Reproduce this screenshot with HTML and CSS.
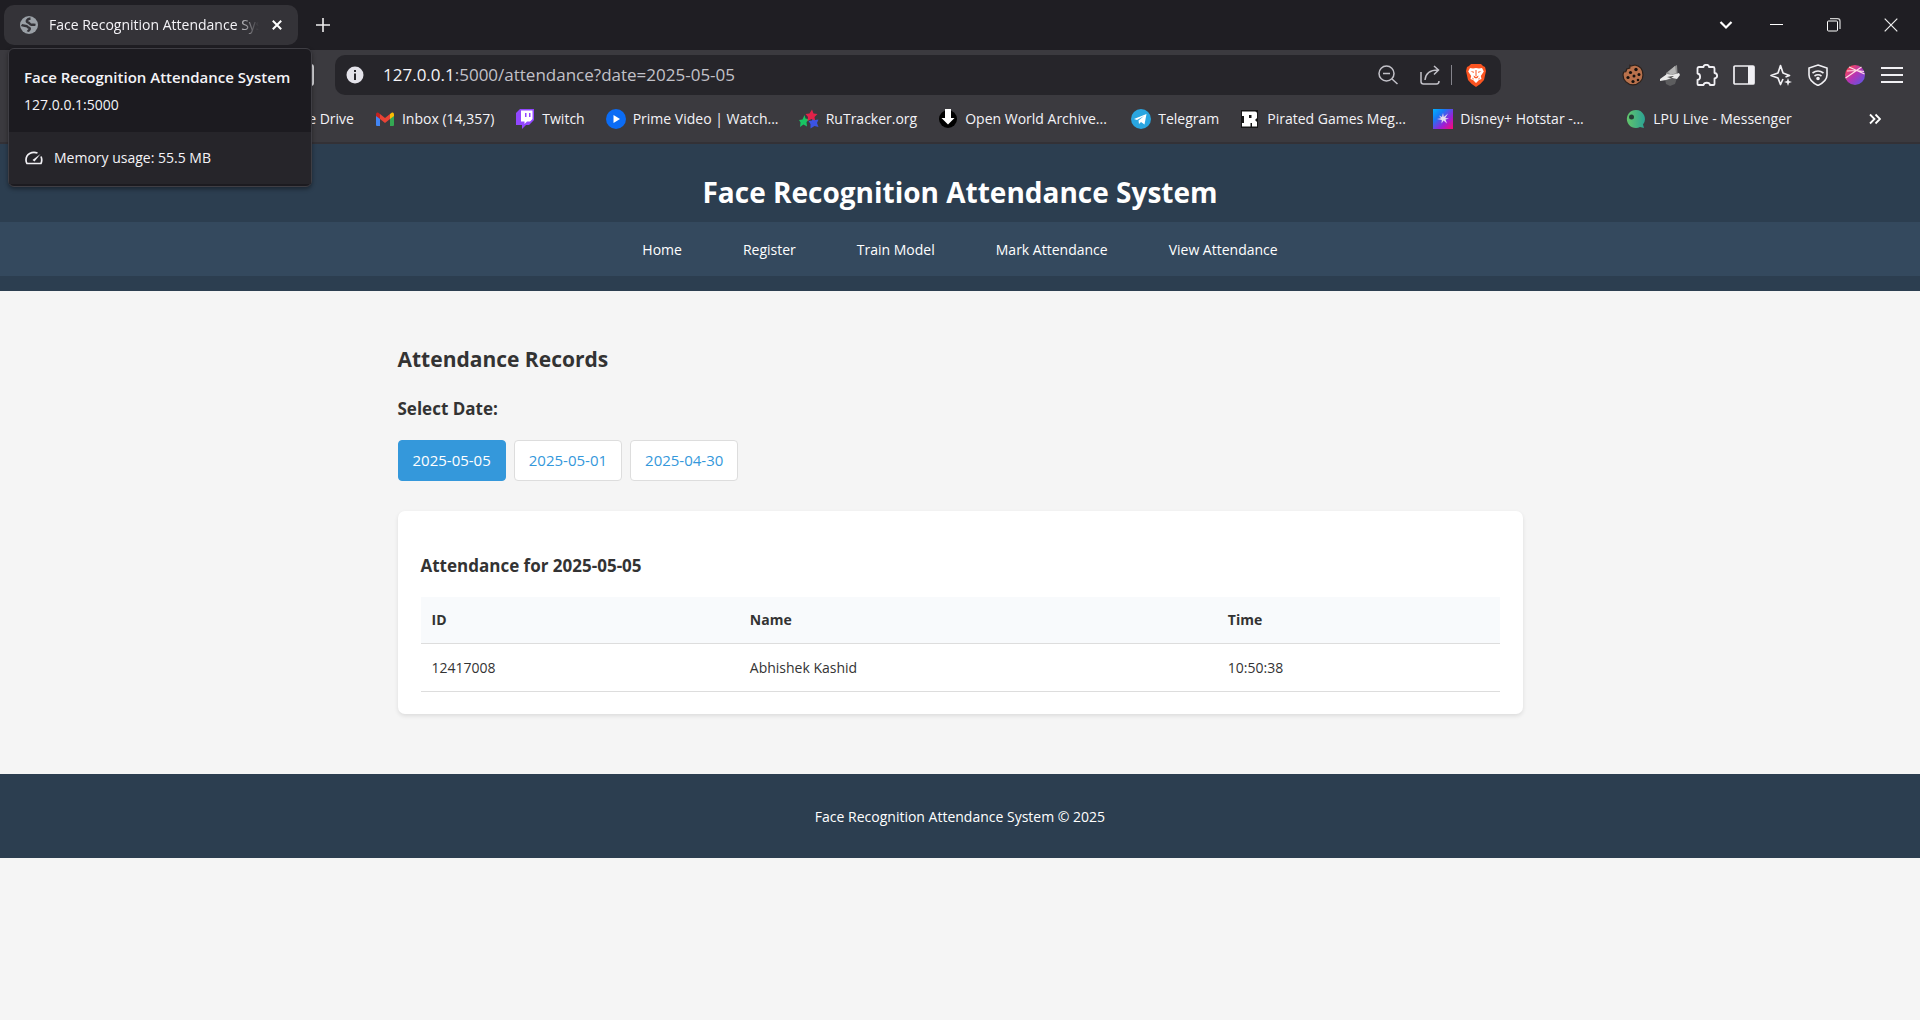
FILE: index.html
```html
<!DOCTYPE html>
<html lang="en">
<head>
<meta charset="utf-8">
<title>Face Recognition Attendance System</title>
<link rel="stylesheet" href="styles.css">
</head>
<body>
<div class="browser">
  <div class="tabstrip">
    <div class="tab">
      <svg class="icon18" viewBox="0 0 18 18"><circle cx="9" cy="9" r="9" fill="#9aa0a6"/><path d="M10.500 2.500C7 3 5.500 5.500 8 6.500c2 .6 1.500 2 3.500 2.200 1.500.2 2.500 0 4 .2M1.500 9c2 1.200 5 .2 6 1.700.6 1.300 2.300.6 2.300 2 0 1.400-1.500 1.600-2 3" fill="none" stroke="#343338" stroke-width="2.400"/></svg>
      <span class="tab-title">Face Recognition Attendance System</span>
      <button class="plain" aria-label="Close tab"><svg width="10" height="10" viewBox="0 0 10 10" fill="none" stroke="#fff" stroke-width="2"><path d="M.8.8l8.400 8.400M9.200.8L.8 9.200"/></svg></button>
    </div>
    <button class="plain new-tab" aria-label="New tab"><svg width="14" height="14" viewBox="0 0 14 14" stroke="#eee" stroke-width="1.600"><path d="M7 0v14M0 7h14"/></svg></button>
    <div class="window-controls">
      <button class="plain search-tabs" aria-label="Search tabs"><svg width="14" height="10" viewBox="0 0 14 10" fill="none" stroke="#fff" stroke-width="2.200"><path d="M1.500 2L7 7.500 12.500 2"/></svg></button>
      <button class="plain win" aria-label="Minimize"><svg width="14" height="14" viewBox="0 0 14 14"><path d="M0 6h13v1H0z" fill="#fff"/></svg></button>
      <button class="plain win" aria-label="Restore"><svg width="14" height="14" viewBox="0 0 14 14" fill="none" stroke="#fff"><rect x=".5" y="3" width="10" height="10" rx="1"/><path d="M3 .7h7.500q2.500 0 2.500 2.500V11" stroke="#ccc" stroke-width="1.300"/></svg></button>
      <button class="plain win" aria-label="Close"><svg width="14" height="14" viewBox="0 0 14 14" stroke="#eee" stroke-width="1.200"><path d="M.7.7l12.600 12.600M13.300.7L.7 13.300"/></svg></button>
    </div>
  </div>

  <div class="toolbar">
    <button class="plain bookmark-page" aria-label="Bookmark"><svg width="20" height="22" viewBox="0 0 20 22" fill="none" stroke="#e8e8ec" stroke-width="1.800"><rect x="1" y="1" width="18" height="20" rx="2"/></svg></button>
    <div class="address">
      <svg width="18" height="18" viewBox="0 0 18 18"><circle cx="9" cy="9" r="8.500" fill="#e4e3ea"/><path d="M8 4h2v2H8zM8 7.500h2V14H8z" fill="#26252a"/></svg>
      <span class="url"><b>127.0.0.1</b>:5000/attendance?date=2025-05-05</span>
      <button class="plain" aria-label="Zoom"><svg width="20" height="20" viewBox="0 0 20 20" fill="none" stroke="#c2c1c8" stroke-width="1.500"><circle cx="8.500" cy="8.500" r="7.500"/><path d="M5 8.500h7M14 14l5.500 5"/></svg></button>
      <button class="plain share" aria-label="Share"><svg width="20" height="20" viewBox="0 0 20 20" fill="none" stroke="#c2c1c8" stroke-width="1.500"><path d="M1 7v9.500Q1 19 3.500 19h13q2.500 0 2.500-3M5 15c.5-6 4-10 13-10M14 1l4.500 4L14 9.500"/></svg></button>
      <span class="divider"></span>
      <button class="plain" aria-label="Brave Shields"><svg width="20" height="24" viewBox="0 0 20 24"><path d="M5 1h10l2 2 2 1 1 4-2 9q-3 4-8 7-5-3-8-7L0 8l1-4 2-1z" fill="#fb5421"/><path d="M4 5l3 .6L10 5l3 .6L16 5l1.800 3.500-3 4.500.7 3-2.500 1-3 3-3-3-2.500-1 .7-3-3-4.500z" fill="#fff"/><path d="M4.500 8l3.500.8-.5 1.200zM15.500 8l-3.500.8.5 1.200zM9.500 7h1v6h-1zM7.500 12.500l2.500 1.500 2.500-1.500-.5 2-2 1-2-1zM6 14.500l2 1.500-1 .5zM14 14.500L12 16l1 .5z" fill="#fb5421"/></svg></button>
    </div>
    <div class="extensions">
      <button class="plain" aria-label="Cookie editor"><svg width="22" height="22" viewBox="0 0 22 22"><path d="M8 1.500C10 3 11 1 13 1c5 1 8 5 8 10a10 9.800 0 0 1-20 0c0-1 .3-2 .8-3l2-.2 1-2.800 3-1z" fill="#b9714c" stroke="#2b201b" stroke-width="1.200"/><g fill="#17110e"><circle cx="14" cy="5.500" r="1.700"/><circle cx="8.500" cy="8.500" r="1.600"/><circle cx="17" cy="10.500" r="1.500"/><circle cx="12" cy="12" r="1.500"/><circle cx="6" cy="13.500" r="1.600"/><circle cx="11" cy="17.500" r="1.600"/><circle cx="16" cy="16" r="1.300"/></g></svg></button>
      <button class="plain" aria-label="Extension"><svg width="22" height="22" viewBox="0 0 22 22"><path d="M6 15l12-1-2 6-5 2-4-2z" fill="#5d5d5f"/><path d="M7 9l9-7 2-1 .5 8L14 13l-7-1z" fill="#8d8d8d"/><path d="M9 8l7-6 1 7-5 2z" fill="#b4b4b4"/><path d="M1 15l7-5 5 1 7-2 1 2-3 4-5-1-6 2-6 1z" fill="#e9e9e9"/><path d="M8 13l7-1-3 2z" fill="#333"/></svg></button>
      <button class="plain" aria-label="Extensions"><svg width="22" height="22" viewBox="0 0 22 22" fill="none" stroke="#f1f0f4" stroke-width="1.800" stroke-linejoin="round"><path d="M1.500 4.500Q1.500 3 3 3h4.500c0-3 5.500-3 5.500 0h4Q18.500 3 18.500 4.500V9c3.500.5 3.500 5 0 5.500V20q0 1-1 1H14c-.5-3-6-3-6.500 0H2.500q-1 0-1-1v-4c3.500-.5 3.500-6 0-6.500z"/></svg></button>
      <button class="plain" aria-label="Sidebar"><svg width="22" height="22" viewBox="0 0 22 22"><rect x="1" y="2" width="20" height="18" rx="1" fill="none" stroke="#f1f0f4" stroke-width="1.700"/><path d="M15 2h6v18h-6z" fill="#f1f0f4"/></svg></button>
      <button class="plain" aria-label="Leo AI"><svg width="22" height="22" viewBox="0 0 22 22" fill="none" stroke="#f1f0f4" stroke-width="1.700" stroke-linejoin="round"><path d="M13 15L10.500 20.500 8 14 1 11.500l7-2.500L10.500 1.500 13 9l6.500 2.500-4 1.500"/><path d="M18 14l1 3 3 1-3 1-1 3-1-3-3-1 3-1z" fill="#f1f0f4" stroke="none"/></svg></button>
      <button class="plain" aria-label="VPN"><svg width="22" height="22" viewBox="0 0 22 22" fill="none" stroke="#f1f0f4" stroke-width="1.600"><path d="M11 1l9 3v7c0 5-4 8-9 10.500C6 19 2 16 2 11V4z"/><path d="M5.500 9q5.500-4 11 0M7.500 12q3.500-2.500 7 0"/><circle cx="11" cy="14.500" r="1" fill="#f1f0f4"/></svg></button>
      <button class="plain" aria-label="Profile"><svg width="22" height="22" viewBox="0 0 22 22"><defs><linearGradient id="profile" x1="0" y1="0" x2="1" y2="1"><stop offset=".1" stop-color="#ff4a55"/><stop offset=".5" stop-color="#b534b5"/><stop offset="1" stop-color="#4d5bed"/></linearGradient></defs><circle cx="11" cy="11" r="10" fill="url(#profile)"/><path d="M5 3l15.500 7M1.500 14L17.500 3M3 7l9-.5 8 1" fill="none" stroke="#ffdce5" stroke-width="1.200"/></svg></button>
      <button class="plain" aria-label="Menu"><svg width="22" height="22" viewBox="0 0 22 22" stroke="#f1f0f4" stroke-width="1.800"><path d="M0 4h22M0 11h22M0 18h22"/></svg></button>
    </div>
  </div>

  <nav class="bookmarks" aria-label="Bookmarks">
    <a class="bookmark first" href="#">Google Drive</a>
    <a class="bookmark" href="#"><svg width="20" height="20" viewBox="0 0 20 20"><path d="M1 6v10q0 1 1 1h3V8z" fill="#4285f4"/><path d="M15 8v9h3q1 0 1-1V5z" fill="#34a853"/><path d="M15 5l2-1.500Q19 3 19 5.500V7l-4 3z" fill="#fbbc04"/><path d="M5 5l5 4 5-4v5l-5 4-5-4z" fill="#ea4335"/><path d="M1 7V5.500Q1 3 3 3.500L5 5v5z" fill="#c5221f"/></svg><span>Inbox (14,357)</span></a>
    <a class="bookmark" href="#"><svg width="20" height="20" viewBox="0 0 20 20"><path d="M5 0h14v11l-5 5h-3l-4 4v-4H1V4z" fill="#9146ff"/><path d="M6 1.500h11.500V10L15 12.500h-3L9.500 15v-2.500H6z" fill="#fff"/><path d="M10 4h1.500v4H10zM14 4h1.500v4H14z" fill="#9146ff"/></svg><span>Twitch</span></a>
    <a class="bookmark clipped" href="#"><svg width="20" height="20" viewBox="0 0 20 20"><circle cx="10" cy="10" r="10" fill="#0b6cf5"/><path d="M7.500 6l6.500 4-6.500 4z" fill="#fff"/></svg><span>Prime Video | Watch...</span></a>
    <a class="bookmark" href="#"><svg width="20" height="20" viewBox="0 0 20 20"><path d="M5.500 6l1 3.500 4 1-3 2.500.5 4.500-3.500-2L1 18l.5-4.500L0 11l3.500-.5z" fill="#19c463"/><path d="M14 8l2 3 3.500-.5L18 14l1.500 4-4-1-4 2.500V15l-2-3 3.500-.5z" fill="#3b54e4"/><path d="M13 .5l1.500 4 4 .5-3 3 .5 3.500-3.500-1.500-4 2 .5-4L6.500 5l4-.5z" fill="#e32249"/></svg><span>RuTracker.org</span></a>
    <a class="bookmark clipped" href="#"><svg width="20" height="20" viewBox="0 0 20 20"><circle cx="10" cy="10" r="9" fill="#000"/><path d="M7 0h6v9h3.500L10 15.500 3.500 9H7z" fill="#fff"/></svg><span>Open World Archive...</span></a>
    <a class="bookmark" href="#"><svg width="20" height="20" viewBox="0 0 20 20"><circle cx="10" cy="10" r="10" fill="#2aa5e0"/><path d="M3 10L15.500 5l-2 10.500L10 13l-2 2-.5-3.500L13 7l-7 4z" fill="#fff"/></svg><span>Telegram</span></a>
    <a class="bookmark clipped" href="#"><svg width="20" height="20" viewBox="0 0 20 20"><path d="M1 1h17v18H1z" fill="#171717"/><path d="M2 2.500h13q2 0 2 2V9l-2 2 2 2v4.500h-5V14h-1.500v3.500H2V14h2V7H2zM9 6v3h2.500V6z" fill="#fff" fill-rule="evenodd"/></svg><span>Pirated Games Meg...</span></a>
    <a class="bookmark clipped" href="#"><svg width="20" height="20" viewBox="0 0 20 20"><defs><linearGradient id="star" x1="0" y1="0" x2="1" y2="1"><stop offset="0" stop-color="#00b2ff"/><stop offset=".3" stop-color="#187af5"/><stop offset=".65" stop-color="#9a20d8"/><stop offset="1" stop-color="#ff0870"/></linearGradient></defs><path d="M0 0h20v20H0z" fill="url(#star)"/><path d="M10 4l.8 4L15 4.500 12.300 9l3.700.6-3.500 1 1.500 4-3.500-3-2 3 .3-3.500L4 10l4-.8L6 6.500l3 1.500z" fill="#e5dcee"/></svg><span>Disney+ Hotstar -...</span></a>
    <a class="bookmark" href="#"><svg width="20" height="20" viewBox="0 0 20 20"><defs><linearGradient id="lpu"><stop offset="0" stop-color="#62c46b"/><stop offset="1" stop-color="#2ca394"/></linearGradient></defs><path d="M10 1a9 9 0 1 0 4 17l4 1-1-3.500A9 9 0 0 0 10 1z" fill="url(#lpu)"/><circle cx="5.500" cy="8" r="2.500" fill="#263c36"/></svg><span>LPU Live - Messenger</span></a>
    <button class="plain overflow" aria-label="More bookmarks"><svg width="12" height="12" viewBox="0 0 12 12" fill="none" stroke="#fff" stroke-width="1.800"><path d="M1 1.500L5.500 6 1 10.500M6.500 1.500L11 6l-4.500 4.500"/></svg></button>
  </nav>

  <aside class="tab-card">
    <div class="tab-card-info">
      <strong>Face Recognition Attendance System</strong>
      <span>127.0.0.1:5000</span>
    </div>
    <div class="tab-card-memory">
      <svg width="18" height="14" viewBox="0 0 18 14" fill="none" stroke="#f1f0f4" stroke-width="1.700"><path d="M12.500 2C7 0 1 3 1 9q0 2 1 3.500h14q1.500-3.500 0-7" stroke-linejoin="round"/><path d="M7.500 9l2 1.500L15.500 3z" fill="#f1f0f4" stroke="none"/></svg>
      <span>Memory usage: 55.5 MB</span>
    </div>
  </aside>
</div>

<header class="site-header">
  <h1>Face Recognition Attendance System</h1>
  <nav class="site-nav">
    <a href="#">Home</a>
    <a href="#">Register</a>
    <a href="#">Train Model</a>
    <a href="#">Mark Attendance</a>
    <a href="#">View Attendance</a>
  </nav>
</header>

<main class="content">
  <h2>Attendance Records</h2>
  <h3>Select Date:</h3>
  <div class="dates">
    <a class="date active" href="#">2025-05-05</a>
    <a class="date" href="#">2025-05-01</a>
    <a class="date" href="#">2025-04-30</a>
  </div>
  <section class="card">
    <h3>Attendance for 2025-05-05</h3>
    <table class="records">
      <thead><tr><th class="col-id">ID</th><th class="col-name">Name</th><th>Time</th></tr></thead>
      <tbody><tr><td>12417008</td><td>Abhishek Kashid</td><td>10:50:38</td></tr></tbody>
    </table>
  </section>
</main>

<footer class="site-footer">Face Recognition Attendance System © 2025</footer>
</body>
</html>
```
FILE: styles.css
```css
* { box-sizing: border-box; }
body {
  margin: 0;
  background: #f5f5f5;
  color: #333;
  font: 14px/22px "Open Sans", "Noto Sans", sans-serif;
}
a { text-decoration: none; }
svg { display: block; flex: none; }
h1, h2, h3 { margin: 0; }

.plain {
  display: flex;
  align-items: center;
  justify-content: center;
  flex: none;
  padding: 0;
  border: 0;
  background: none;
}

/* Browser window */
.browser {
  position: relative;
  background: #3b3a3f;
  border-bottom: 2px solid #333136;
  color: #f4f3f7;
}
.tabstrip {
  display: flex;
  align-items: center;
  height: 50px;
  padding: 0 1px 0 4px;
  background: #1f1e23;
}
.tab {
  display: flex;
  align-items: center;
  gap: 11px;
  width: 294px;
  height: 40px;
  padding: 0 16px;
  border-radius: 10px;
  background: #343338;
}
.icon18 { width: 18px; height: 18px; }
.tab-title {
  flex: 1;
  overflow: hidden;
  white-space: nowrap;
  mask-image: linear-gradient(to right, #000 88%, transparent 99%);
}
.new-tab { margin-left: 18px; }
.window-controls {
  display: flex;
  align-items: center;
  margin-left: auto;
}
.search-tabs { width: 44px; }
.win { width: 57px; height: 46px; }

.toolbar {
  display: flex;
  align-items: center;
  height: 50px;
  padding: 0 17px 0 294px;
}
.address {
  display: flex;
  align-items: center;
  flex: 1;
  height: 40px;
  margin-left: 21px;
  padding: 0 15px 0 11px;
  border-radius: 10px;
  background: #26252a;
}
.url {
  flex: 1;
  margin-left: 19px;
  color: #c2c1c8;
  font-size: 17px;
}
.url b { color: #f4f3f7; font-weight: 400; }
.share { margin-left: 22px; }
.divider {
  width: 1px;
  height: 20px;
  margin: 0 14px 0 11px;
  background: #85848c;
}
.extensions { display: flex; gap: 15px; margin-left: 121px; }

.bookmarks {
  display: flex;
  align-items: center;
  gap: 21px;
  height: 42px;
  padding: 0 39px 4px 270px;
  white-space: nowrap;
}
.bookmark {
  display: flex;
  align-items: center;
  gap: 7px;
  color: #f4f3f7;
}
.clipped { width: 172px; }
.overflow { margin-left: auto; }

.tab-card {
  position: absolute;
  top: 48px;
  left: 8px;
  width: 304px;
  padding-bottom: 2px;
  border: 1px solid #3f3e44;
  border-radius: 6px;
  background: #1c1b20;
  box-shadow: 0 2px 4px rgba(0, 0, 0, .4);
}
.tab-card-info {
  display: flex;
  flex-direction: column;
  gap: 6px;
  padding: 17px 15px 16px;
  white-space: nowrap;
}
.tab-card-info strong { font-size: 15px; font-weight: 600; }
.tab-card-memory {
  display: flex;
  align-items: center;
  gap: 11px;
  height: 52px;
  padding: 0 16px;
  background: #26252a;
}

/* Attendance page */
.site-header {
  padding: 25px 0 15px;
  background: #2c3e50;
  color: #fff;
  text-align: center;
}
h1 { margin-bottom: 7px; font-size: 28px; line-height: 46px; }
.site-nav {
  display: flex;
  justify-content: center;
  gap: 61px;
  padding: 17px 0 15px;
  background: #34495e;
}
.site-nav a { color: #fff; }

.content {
  max-width: 1125px;
  margin: 0 auto;
  padding: 51px 0 60px;
}
h2 { margin-bottom: 19px; font-size: 21px; line-height: 34px; }
h3 { font-size: 17px; line-height: 28px; }
.dates { display: flex; gap: 8px; margin: 17px 0 30px; }
.date {
  padding: 9px 14px;
  border: 1px solid #ddd;
  border-radius: 4px;
  background: #fff;
  color: #3498db;
  font-size: 15px;
  line-height: 21px;
}
.date.active { border-color: #3498db; background: #3498db; color: #fff; }

.card {
  padding: 41px 23px 22px;
  border-radius: 7px;
  background: #fff;
  box-shadow: 0 2px 4px rgba(0, 0, 0, .1);
}
.records {
  width: 100%;
  margin-top: 17px;
  border-collapse: collapse;
  table-layout: fixed;
}
.records th, .records td {
  padding: 12px 11px;
  border-bottom: 1px solid #ddd;
  text-align: left;
}
.records td { padding-top: 13px; }
.records th { background: #f8fafc; }
.col-id { width: 29.5%; }
.col-name { width: 44.3%; }

.site-footer {
  padding: 32px 0 30px;
  background: #2c3e50;
  color: #fff;
  text-align: center;
}
```
